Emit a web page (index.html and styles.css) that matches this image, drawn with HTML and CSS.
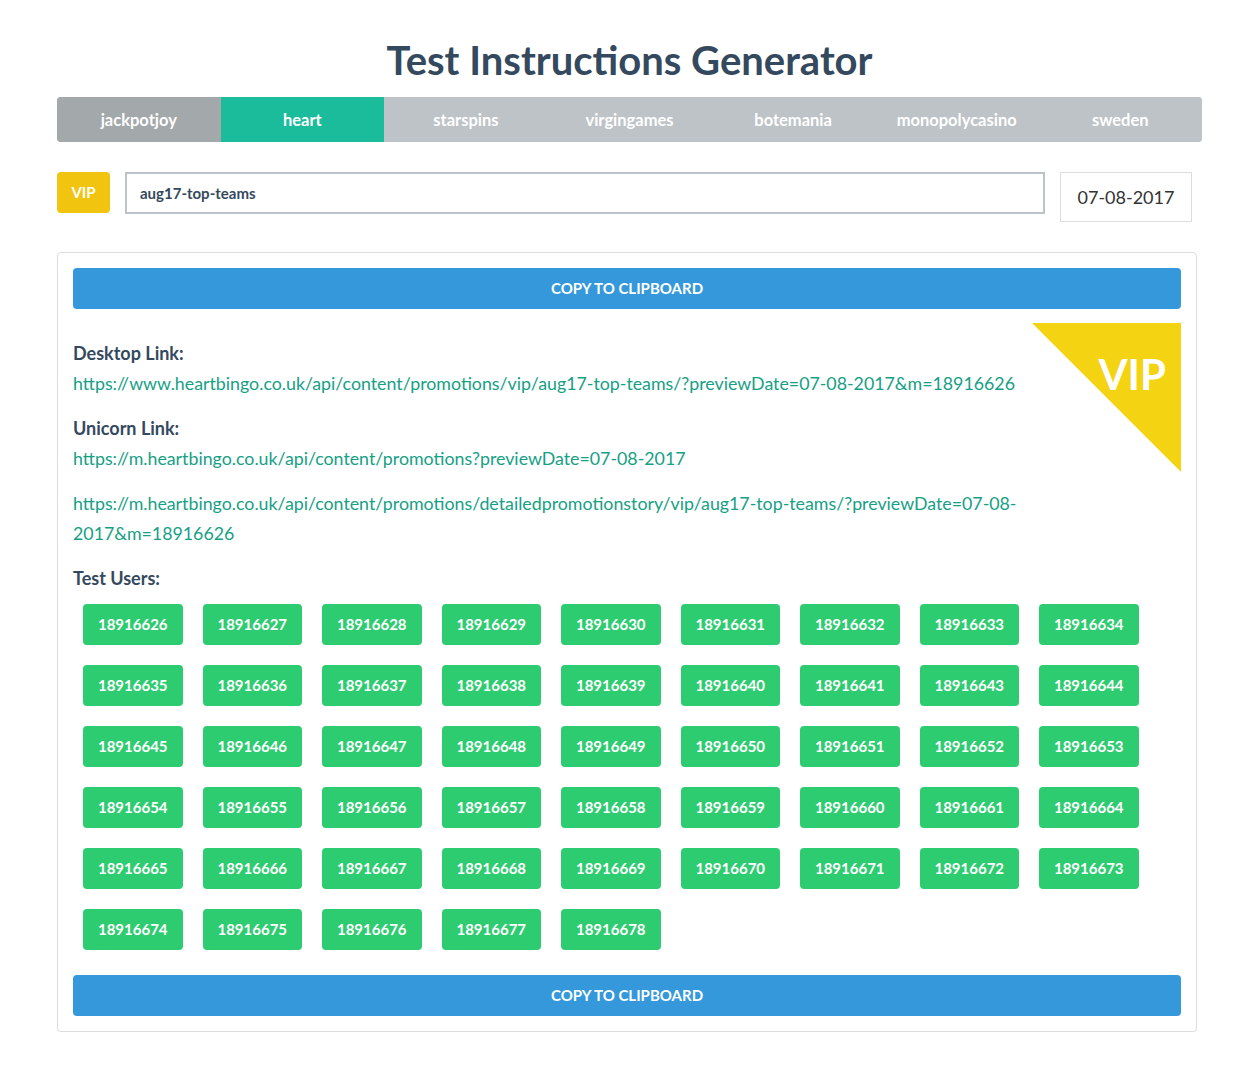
FILE: index.html
```html
<!DOCTYPE html>
<html>
<head>
<meta charset="utf-8">
<title>Test Instructions Generator</title>
<link rel="stylesheet" href="styles.css">
</head>
<body>
<div class="page">
  <h1 class="title">Test Instructions Generator</h1>
  <nav class="tabs">
    <div class="tab tab-visited">jackpotjoy</div>
    <div class="tab tab-active">heart</div>
    <div class="tab">starspins</div>
    <div class="tab">virgingames</div>
    <div class="tab">botemania</div>
    <div class="tab">monopolycasino</div>
    <div class="tab">sweden</div>
  </nav>
  <div class="controls">
    <div class="vip-badge">VIP</div>
    <div class="slug-input">aug17-top-teams</div>
    <div class="date-box">07-08-2017</div>
  </div>
  <section class="panel">
    <div class="copy-btn">COPY TO CLIPBOARD</div>
    <div class="vip-corner"><span class="vip-corner-text">VIP</span></div>
    <div class="links">
      <div class="block">
        <div class="label">Desktop Link:</div>
        <div class="link">https://www.heartbingo.co.uk/api/content/promotions/vip/aug17-top-teams/?previewDate=07-08-2017&amp;m=18916626</div>
      </div>
      <div class="block">
        <div class="label">Unicorn Link:</div>
        <div class="link">https://m.heartbingo.co.uk/api/content/promotions?previewDate=07-08-2017</div>
      </div>
      <div class="block">
        <div class="link">https://m.heartbingo.co.uk/api/content/promotions/detailedpromotionstory/vip/aug17-top-teams/?previewDate=07-08-2017&amp;m=18916626</div>
      </div>
      <div class="label">Test Users:</div>
    </div>
    <div class="users">
      <div class="user">18916626</div>
      <div class="user">18916627</div>
      <div class="user">18916628</div>
      <div class="user">18916629</div>
      <div class="user">18916630</div>
      <div class="user">18916631</div>
      <div class="user">18916632</div>
      <div class="user">18916633</div>
      <div class="user">18916634</div>
      <div class="user">18916635</div>
      <div class="user">18916636</div>
      <div class="user">18916637</div>
      <div class="user">18916638</div>
      <div class="user">18916639</div>
      <div class="user">18916640</div>
      <div class="user">18916641</div>
      <div class="user">18916643</div>
      <div class="user">18916644</div>
      <div class="user">18916645</div>
      <div class="user">18916646</div>
      <div class="user">18916647</div>
      <div class="user">18916648</div>
      <div class="user">18916649</div>
      <div class="user">18916650</div>
      <div class="user">18916651</div>
      <div class="user">18916652</div>
      <div class="user">18916653</div>
      <div class="user">18916654</div>
      <div class="user">18916655</div>
      <div class="user">18916656</div>
      <div class="user">18916657</div>
      <div class="user">18916658</div>
      <div class="user">18916659</div>
      <div class="user">18916660</div>
      <div class="user">18916661</div>
      <div class="user">18916664</div>
      <div class="user">18916665</div>
      <div class="user">18916666</div>
      <div class="user">18916667</div>
      <div class="user">18916668</div>
      <div class="user">18916669</div>
      <div class="user">18916670</div>
      <div class="user">18916671</div>
      <div class="user">18916672</div>
      <div class="user">18916673</div>
      <div class="user">18916674</div>
      <div class="user">18916675</div>
      <div class="user">18916676</div>
      <div class="user">18916677</div>
      <div class="user">18916678</div>
    </div>
    <div class="copy-btn copy-btn-bottom">COPY TO CLIPBOARD</div>
  </section>
</div>
</body>
</html>
```

FILE: styles.css
```css
* { box-sizing: border-box; }
html, body { margin: 0; padding: 0; background: #fff; }
body {
  font-family: Lato, "Open Sans", "Liberation Sans", sans-serif;
  color: #34495e;
}
.page {
  width: 1145px;
  margin-left: 57px;
  padding-top: 36px;
}
.title {
  margin: 0 0 13px 0;
  font-size: 40px;
  line-height: 48px;
  font-weight: 700;
  text-align: center;
  color: #34495e;
}
.tabs {
  display: flex;
  height: 45px;
  border-radius: 4px;
  overflow: hidden;
  background: #bdc3c7;
}
.tab {
  flex: 1 1 0;
  display: flex;
  align-items: center;
  justify-content: center;
  color: #fff;
  font-size: 16.5px;
  font-weight: 700;
  background: #bdc3c7;
}
.tab-visited { background: #a3a8aa; }
.tab-active { background: #1abc9c; }
.controls {
  display: flex;
  align-items: flex-start;
  margin-top: 30px;
  width: 1135px;
}
.vip-badge {
  width: 53px;
  height: 41px;
  border-radius: 4px;
  background: #f1c40f;
  color: #fff;
  font-size: 15px;
  font-weight: 700;
  display: flex;
  align-items: center;
  justify-content: center;
  padding-bottom: 1px;
}
.slug-input {
  margin-left: 15px;
  width: 920px;
  height: 42px;
  border: 2px solid #bdc3c7;
  padding-left: 13px;
  display: flex;
  align-items: center;
  font-size: 15px;
  font-weight: 700;
  color: #34495e;
}
.date-box {
  margin-left: 15px;
  width: 132px;
  height: 50px;
  border: 1px solid #ddd;
  display: flex;
  align-items: center;
  justify-content: center;
  font-size: 18px;
  color: #333;
  padding-bottom: 1px;
}
.panel {
  position: relative;
  width: 1140px;
  margin-top: 30px;
  border: 1px solid #ddd;
  border-radius: 4px;
  box-shadow: 0 1px 1px rgba(0,0,0,0.05);
  padding: 15px;
}
.copy-btn {
  height: 41px;
  border-radius: 4px;
  background: #3498db;
  color: #fff;
  font-size: 15px;
  font-weight: 700;
  display: flex;
  align-items: center;
  justify-content: center;
  padding-bottom: 1px;
}
.copy-btn-bottom { margin-top: 25px; }
.vip-corner {
  position: absolute;
  top: 70px;
  right: 15px;
  width: 149px;
  height: 149px;
  background: #f4d313;
  clip-path: polygon(0 0, 100% 0, 100% 100%);
}
.vip-corner-text {
  position: absolute;
  right: 15px;
  top: 24px;
  color: #fff;
  font-size: 42px;
  font-weight: 700;
  line-height: 54px;
}
.links {
  padding-top: 29px;
  padding-right: 149px;
}
.block { margin-bottom: 15px; }
.label {
  font-size: 18px;
  font-weight: 700;
  line-height: 30px;
  color: #34495e;
}
.link {
  font-size: 17.8px;
  line-height: 30px;
  color: #16a085;
}
.users {
  display: flex;
  flex-wrap: wrap;
  column-gap: 20px;
  row-gap: 20px;
  margin-top: 11px;
  padding-left: 10px;
}
.user {
  width: 99.5px;
  height: 41px;
  border-radius: 4px;
  background: #2ecc71;
  color: #fff;
  font-size: 15px;
  font-weight: 700;
  display: flex;
  align-items: center;
  justify-content: center;
  padding-bottom: 1px;
}
```
